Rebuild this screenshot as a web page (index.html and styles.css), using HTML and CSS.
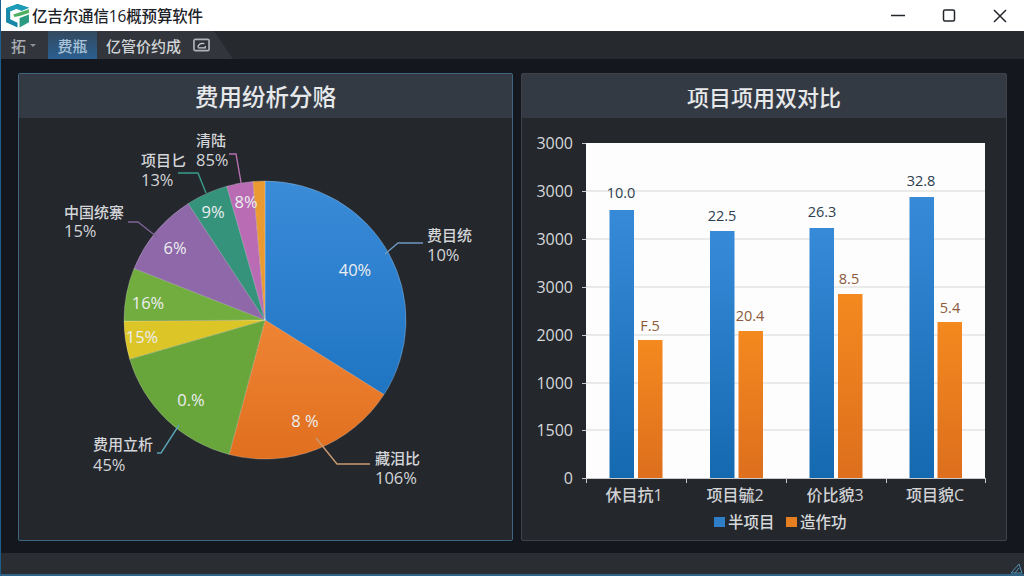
FILE: index.html
```html
<!DOCTYPE html>
<html lang="zh">
<head>
<meta charset="utf-8">
<title>亿吉尔通信16概预算软件</title>
<link rel="stylesheet" href="styles.css">
</head>
<body>
<div class="app">
  <header class="titlebar">
    <svg class="logo" viewBox="0 0 24 24" width="25" height="25">
      <path d="M12 1 L23 4.500 L16 7.500 L11 5.500 L5 8 L5 15.500 L12 19 L12 23.500 L1 18.500 L1 5 Z" fill="#1787a8"/>
      <path d="M12 1 L23 4.500 L16 7.500 L11 5.500 L5 8 L1 5 Z" fill="#1c9cb6"/>
      <path d="M8 11 L23 6 L23 9.500 L14 12.500 L9 13.500 Z" fill="#4fb060"/>
      <path d="M14 14.500 L23 11 L23 18.500 L14 23.500 Z" fill="#2a9a80"/>
    </svg>
    <div class="app-title">亿吉尔通信16概预算软件</div>
    <div class="win-controls">
      <svg class="win-btn" viewBox="0 0 16 16" width="16" height="16"><path d="M1 7.500 H15" class="win-stroke"/></svg>
      <svg class="win-btn" viewBox="0 0 16 16" width="16" height="16"><rect x="2.500" y="2" width="11" height="11" rx="1.500" class="win-stroke"/></svg>
      <svg class="win-btn" viewBox="0 0 16 16" width="16" height="16"><path d="M2 2 L14 14 M14 2 L2 14" class="win-stroke"/></svg>
    </div>
  </header>

  <nav class="menubar">
    <div class="menu-left">
      <span class="menu-item menu-first">拓<i class="caret"></i></span>
      <span class="menu-item menu-active">费瓶</span>
      <span class="menu-item menu-main">亿管价约成</span>
      <svg class="menu-icon" viewBox="0 0 18 14" width="17" height="14">
        <rect x="1" y="1" width="16" height="12" rx="1.500" class="icon-frame"/>
        <path d="M5 9.500 C6 6 9 5 12 5.500 M5.500 10 H13 V8" class="icon-curl"/>
      </svg>
    </div>
  </nav>

  <main class="content">
    <section class="panel panel-blue">
      <h2 class="panel-head">费用纷析分赂</h2>
      <div class="panel-body">
        <svg class="chart" viewBox="19 118 493 422" width="493" height="422">
          <defs>
            <linearGradient id="pb" x1="0" y1="0" x2="0" y2="1"><stop offset="0" stop-color="#3a8bd8"/><stop offset="1" stop-color="#1f75c2"/></linearGradient>
            <linearGradient id="po" x1="0" y1="0" x2="0" y2="1"><stop offset="0" stop-color="#ef8435"/><stop offset="1" stop-color="#e06f1f"/></linearGradient>
          </defs>
          <g class="pie">
            <path fill="url(#pb)" d="M265 320 L265 181 A141 139 0 0 1 384 394.600 Z"/>
            <path fill="url(#po)" d="M265 320 L384 394.600 A141 139 0 0 1 229.100 454.500 Z"/>
            <path fill="#68a53a" d="M265 320 L229.100 454.500 A141 139 0 0 1 129.600 359.100 Z"/>
            <path fill="#dcc527" d="M265 320 L129.600 359.100 A141 139 0 0 1 124 321 Z"/>
            <path fill="#72ad3f" d="M265 320 L124 321 A141 139 0 0 1 134 268.400 Z"/>
            <path fill="#8e68a8" d="M265 320 L134 268.400 A141 139 0 0 1 188.200 203.500 Z"/>
            <path fill="#35937c" d="M265 320 L188.200 203.500 A141 139 0 0 1 226.800 186.200 Z"/>
            <path fill="#b96cb4" d="M265 320 L226.800 186.200 A141 139 0 0 1 253 181.500 Z"/>
            <path fill="#eb9a32" d="M265 320 L253 181.500 A141 139 0 0 1 265 181 Z"/>
          </g>
          <path class="lead" stroke="#b86fb0" d="M229 154 H236 L242 188"/>
          <path class="lead" stroke="#3a9d8a" d="M178 173 H198 L206 193"/>
          <path class="lead" stroke="#7d6396" d="M128 222 H138 L157 237"/>
          <path class="lead" stroke="#5aa3b5" d="M157 453 H161 L179 425"/>
          <path class="lead" stroke="#c99a72" d="M316 438 L337 464 H370"/>
          <path class="lead" stroke="#7099c0" d="M423 243 H398 L385 254"/>

          <text class="lbl" x="196" y="146">清陆</text>
          <text class="num" x="196" y="166">85%</text>
          <text class="lbl" x="141" y="166">项目匕</text>
          <text class="num" x="141" y="186">13%</text>
          <text class="lbl" x="64" y="218">中国统寨</text>
          <text class="num" x="64" y="237">15%</text>
          <text class="lbl" x="93" y="450">费用立析</text>
          <text class="num" x="93" y="471">45%</text>
          <text class="lbl" x="375" y="464">藏泪比</text>
          <text class="num" x="375" y="484">106%</text>
          <text class="lbl" x="427" y="241">费目统</text>
          <text class="num" x="427" y="261">10%</text>

          <text class="pct" x="355" y="276">40%</text>
          <text class="pct" x="305" y="427">8 %</text>
          <text class="pct" x="191" y="406">0.%</text>
          <text class="pct" x="142" y="343">15%</text>
          <text class="pct" x="148" y="309">16%</text>
          <text class="pct" x="175" y="254">6%</text>
          <text class="pct" x="213" y="218">9%</text>
          <text class="pct" x="246" y="208">8%</text>
        </svg>
      </div>
    </section>

    <section class="panel">
      <h2 class="panel-head panel-head-r">项目项用双对比</h2>
      <div class="panel-body">
        <svg class="chart" viewBox="522 118 484 422" width="484" height="422">
          <defs>
            <linearGradient id="gb" x1="0" y1="0" x2="0" y2="1"><stop offset="0" stop-color="#378ad8"/><stop offset="1" stop-color="#1569b0"/></linearGradient>
            <linearGradient id="go" x1="0" y1="0" x2="0" y2="1"><stop offset="0" stop-color="#f4891f"/><stop offset="1" stop-color="#dd6f1d"/></linearGradient>
          </defs>
          <rect x="586" y="143" width="399" height="335" fill="#fdfdfd"/>
          <path class="grid" d="M586 191 H985 M586 239 H985 M586 287 H985 M586 335 H985 M586 383 H985 M586 430 H985"/>
          <path class="axis" d="M582 143.500 H586 M582 191.500 H586 M582 239.500 H586 M582 287.500 H586 M582 335.500 H586 M582 383.500 H586 M582 430.500 H586 M582 478.500 H985 M586.500 478 V483 M686.500 478 V483 M786.500 478 V483 M886.500 478 V483 M985.500 478 V483"/>
          <g class="ytext">
            <text x="573" y="149">3000</text><text x="573" y="197">3000</text><text x="573" y="245">3000</text>
            <text x="573" y="293">3000</text><text x="573" y="341">2000</text><text x="573" y="389">1000</text>
            <text x="573" y="436">1500</text><text x="573" y="484">0</text>
          </g>
          <rect x="609.500" y="210" width="24.500" height="268" fill="url(#gb)"/>
          <rect x="638" y="340" width="24.500" height="138" fill="url(#go)"/>
          <rect x="710" y="231" width="24.500" height="247" fill="url(#gb)"/>
          <rect x="738.500" y="331" width="24.500" height="147" fill="url(#go)"/>
          <rect x="809.500" y="228" width="24.500" height="250" fill="url(#gb)"/>
          <rect x="838" y="294" width="24.500" height="184" fill="url(#go)"/>
          <rect x="909.500" y="197" width="24.500" height="281" fill="url(#gb)"/>
          <rect x="937.500" y="322" width="24.500" height="156" fill="url(#go)"/>
          <g class="vblue">
            <text x="621" y="198">10.0</text><text x="722" y="221">22.5</text>
            <text x="822" y="217">26.3</text><text x="921" y="186">32.8</text>
          </g>
          <g class="vorange">
            <text x="650" y="331">F.5</text><text x="750" y="321">20.4</text>
            <text x="849" y="284">8.5</text><text x="950" y="313">5.4</text>
          </g>
          <g class="xtext">
            <text x="634" y="501">休目抗1</text><text x="735" y="501">项目毓2</text>
            <text x="835" y="501">价比貌3</text><text x="935" y="501">项目貌C</text>
          </g>
          <rect x="714" y="517" width="11" height="10" fill="#2f7fc8"/>
          <text class="legend" x="728" y="528">半项目</text>
          <rect x="786" y="517" width="11" height="10" fill="#e57f22"/>
          <text class="legend" x="800" y="528">造作功</text>
        </svg>
      </div>
    </section>
  </main>

  <footer class="statusbar">
    <svg class="grip" viewBox="0 0 14 14" width="14" height="14"><path d="M1 13 L9 4 L12 13 Z M5 13 L9 8" class="grip-line"/></svg>
  </footer>
</div>
</body>
</html>
```
FILE: styles.css
```css
* { box-sizing: border-box; }
html, body { margin: 0; padding: 0; }
body {
  width: 1024px;
  height: 576px;
  overflow: hidden;
  font-family: "Open Sans", "Noto Sans CJK SC", sans-serif;
  background: #14181e;
}
.app {
  width: 1024px;
  height: 576px;
  display: flex;
  flex-direction: column;
  border-left: 1px solid #1c5f8c;
  border-bottom: 2px solid #2f6488;
}
.titlebar {
  height: 31px;
  flex: none;
  background: #fff;
  display: flex;
  align-items: center;
  padding-left: 4px;
  gap: 2px;
}
.logo { flex: none; margin-top: -1px; }
.app-title { font-size: 15.500px; color: #1c2228; letter-spacing: -0.150px; font-weight: 500; }
.win-controls { margin-left: auto; display: flex; align-items: center; gap: 35px; padding-right: 16px; }
.win-stroke { fill: none; stroke: #23272b; stroke-width: 1.500; }
.menubar {
  height: 28px;
  flex: none;
  background: #26292e;
}
.menu-left {
  height: 100%;
  width: 232px;
  background: #32363c;
  clip-path: polygon(0 0, 213px 0, 232px 100%, 0 100%);
  display: flex;
  align-items: center;
  color: #c4c8cc;
  font-size: 15px;
  font-weight: 500;
}
.menu-item { height: 100%; display: flex; align-items: center; }
.menu-first { width: 47px; padding-left: 10px; color: #a9adb2; }
.caret { width: 0; height: 0; margin-left: 4px; border: 3px solid transparent; border-top: 3px solid #8b9096; border-bottom: 0; }
.menu-active {
  width: 49px;
  justify-content: center;
  background: linear-gradient(#34495f, #2a5f90);
  color: #a9c3da;
}
.menu-main { padding-left: 9px; width: 96px; white-space: nowrap; color: #d0d3d6; }
.menu-icon { flex: none; }
.icon-frame { fill: #30343a; stroke: #aeb2b6; stroke-width: 1.800; }
.icon-curl { fill: none; stroke: #c8ccd0; stroke-width: 1.300; }
.content {
  flex: 1;
  min-height: 0;
  background: #14181e;
  display: flex;
  gap: 8px;
  padding: 14px 16px 12px 17px;
}
.panel {
  width: 486px;
  flex: none;
  display: flex;
  flex-direction: column;
  border: 1px solid #3e434b;
  border-radius: 2px;
  background: #24272c;
}
.panel-blue { width: 495px; border-color: #3f6680; }
.panel-head {
  margin: 0;
  height: 44px;
  flex: none;
  background: #333a44;
  color: #e6e8ea;
  font-size: 23.500px;
  font-weight: 500;
  display: flex;
  align-items: center;
  justify-content: center;
  padding-bottom: 1px;
}
.panel-head-r { font-size: 22px; }
.panel-body { flex: 1; min-height: 0; }
.chart { display: block; }
.pie path { stroke: rgba(255, 255, 255, 0.22); stroke-width: 1; }
.lead { fill: none; stroke-width: 1.400; }
.lbl { font-size: 15px; font-weight: 500; fill: #d3d5d8; }
.num { font-size: 16.500px; fill: #d3d5d8; }
.pct { font-size: 16.500px; fill: #eceef0; text-anchor: middle; }
.grid { stroke: #e4e4e2; stroke-width: 1.500; fill: none; }
.axis { stroke: #c8cacc; stroke-width: 1; fill: none; }
.ytext text { font-size: 16px; fill: #d6d8da; text-anchor: end; }
.vblue text { font-size: 14.500px; fill: #2c3e50; text-anchor: middle; }
.vorange text { font-size: 14.500px; fill: #8a5a3a; text-anchor: middle; }
.xtext text { font-size: 16px; font-weight: 500; fill: #d0d2d5; text-anchor: middle; }
.legend { font-size: 15.500px; font-weight: 500; fill: #d6d8da; }
.statusbar {
  height: 21px;
  flex: none;
  background: #2a2d32;
  display: flex;
  justify-content: flex-end;
  align-items: flex-end;
}
.grip { display: block; }
.grip-line { fill: none; stroke: #4f93b8; stroke-width: 1; }
```
